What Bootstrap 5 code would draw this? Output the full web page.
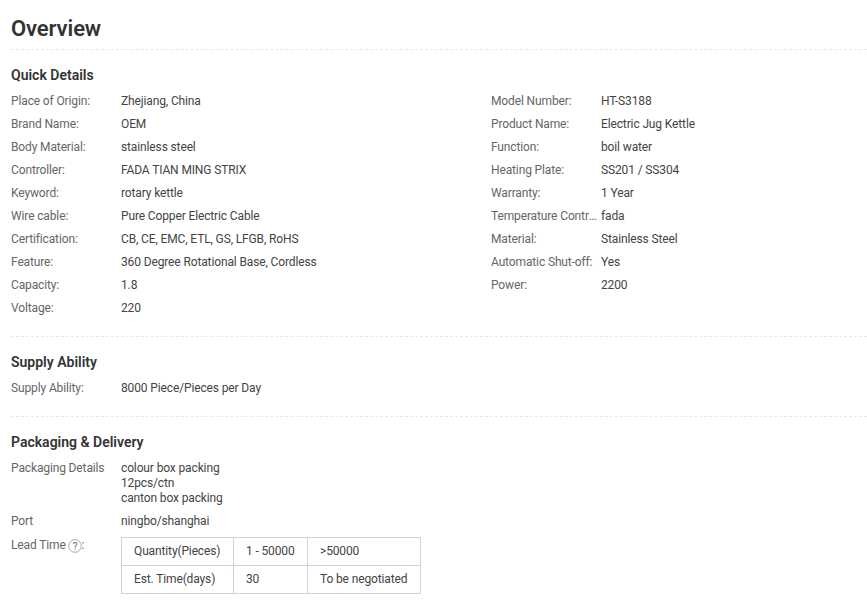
<!DOCTYPE html>
<html lang="en">
<head>
<meta charset="utf-8">
<title>Overview</title>
<link href="https://cdn.jsdelivr.net/npm/bootstrap@5.3.0/dist/css/bootstrap.min.css" rel="stylesheet">
<style>
body { font-family: Roboto, "Liberation Sans", sans-serif; font-size: 12px; line-height: 15px; letter-spacing: -0.13px; color: #444; background: #fff; }
.ov-page { padding-left: 11px; }
.ov-title { font-size: 22px; line-height: 26px; font-weight: 600; letter-spacing: -0.1px; color: #333; margin: 0; padding: 16px 0 7px; border-bottom: 1px dashed #e8e8e8; }
.ov-section { border-bottom: 1px dashed #e8e8e8; }
.ov-section-last { border-bottom: 0; }
.ov-quick { padding: 17px 0 16px; }
.ov-supply { padding: 17px 0 16px; }
.ov-pack { padding: 17px 0 0; }
.ov-head { font-size: 14px; line-height: 17px; font-weight: 600; letter-spacing: 0; color: #333; margin: 0 0 6px; }
.ov-cols { width: 960px; }
.ov-col { width: 480px; flex: none; }
.ov-item { padding: 4px 0; }
.ov-label { width: 110px; flex: none; color: #666; padding-right: 4px; white-space: nowrap; overflow: hidden; text-overflow: ellipsis; }
.ov-label-lead { padding-top: 1px; }
.ov-value { color: #444; }
.ov-help { width: 14px; height: 14px; vertical-align: -4px; margin-left: -1px; }
.ov-table { width: 300px; table-layout: fixed; border-collapse: collapse; }
.ov-table td { border: 1px solid #c9d3e3; height: 28px; padding: 0 12px; color: #444; white-space: nowrap; }
.ov-c1 { width: 112px; }
.ov-c2 { width: 74px; }
</style>
</head>
<body>
<div class="ov-page overflow-hidden">
  <h1 class="ov-title">Overview</h1>

  <section class="ov-section ov-quick">
    <h2 class="ov-head">Quick Details</h2>
    <div class="d-flex ov-cols">
      <div class="ov-col">
        <div class="d-flex ov-item"><div class="ov-label">Place of Origin:</div><div class="ov-value">Zhejiang, China</div></div>
        <div class="d-flex ov-item"><div class="ov-label">Brand Name:</div><div class="ov-value">OEM</div></div>
        <div class="d-flex ov-item"><div class="ov-label">Body Material:</div><div class="ov-value">stainless steel</div></div>
        <div class="d-flex ov-item"><div class="ov-label">Controller:</div><div class="ov-value">FADA TIAN MING STRIX</div></div>
        <div class="d-flex ov-item"><div class="ov-label">Keyword:</div><div class="ov-value">rotary kettle</div></div>
        <div class="d-flex ov-item"><div class="ov-label">Wire cable:</div><div class="ov-value">Pure Copper Electric Cable</div></div>
        <div class="d-flex ov-item"><div class="ov-label">Certification:</div><div class="ov-value">CB, CE, EMC, ETL, GS, LFGB, RoHS</div></div>
        <div class="d-flex ov-item"><div class="ov-label">Feature:</div><div class="ov-value">360 Degree Rotational Base, Cordless</div></div>
        <div class="d-flex ov-item"><div class="ov-label">Capacity:</div><div class="ov-value">1.8</div></div>
        <div class="d-flex ov-item"><div class="ov-label">Voltage:</div><div class="ov-value">220</div></div>
      </div>
      <div class="ov-col">
        <div class="d-flex ov-item"><div class="ov-label">Model Number:</div><div class="ov-value">HT-S3188</div></div>
        <div class="d-flex ov-item"><div class="ov-label">Product Name:</div><div class="ov-value">Electric Jug Kettle</div></div>
        <div class="d-flex ov-item"><div class="ov-label">Function:</div><div class="ov-value">boil water</div></div>
        <div class="d-flex ov-item"><div class="ov-label">Heating Plate:</div><div class="ov-value">SS201 / SS304</div></div>
        <div class="d-flex ov-item"><div class="ov-label">Warranty:</div><div class="ov-value">1 Year</div></div>
        <div class="d-flex ov-item"><div class="ov-label">Temperature Control:</div><div class="ov-value">fada</div></div>
        <div class="d-flex ov-item"><div class="ov-label">Material:</div><div class="ov-value">Stainless Steel</div></div>
        <div class="d-flex ov-item"><div class="ov-label">Automatic Shut-off:</div><div class="ov-value">Yes</div></div>
        <div class="d-flex ov-item"><div class="ov-label">Power:</div><div class="ov-value">2200</div></div>
      </div>
    </div>
  </section>

  <section class="ov-section ov-supply">
    <h2 class="ov-head">Supply Ability</h2>
    <div class="d-flex ov-item"><div class="ov-label">Supply Ability:</div><div class="ov-value">8000 Piece/Pieces per Day</div></div>
  </section>

  <section class="ov-section ov-section-last ov-pack">
    <h2 class="ov-head">Packaging &amp; Delivery</h2>
    <div class="d-flex ov-item"><div class="ov-label">Packaging Details</div><div class="ov-value">colour box packing<br>12pcs/ctn<br>canton box packing</div></div>
    <div class="d-flex ov-item"><div class="ov-label">Port</div><div class="ov-value">ningbo/shanghai</div></div>
    <div class="d-flex ov-item">
      <div class="ov-label ov-label-lead">Lead Time <svg class="ov-help" viewBox="0 0 14 14" aria-hidden="true"><circle cx="7" cy="7" r="6.3" fill="none" stroke="#9fabbd"/><text x="7" y="10.5" text-anchor="middle" font-size="10" font-family="Roboto, sans-serif" fill="#666">?</text></svg>:</div>
      <table class="ov-table">
        <tr><td class="ov-c1">Quantity(Pieces)</td><td class="ov-c2">1 - 50000</td><td>&gt;50000</td></tr>
        <tr><td class="ov-c1">Est. Time(days)</td><td class="ov-c2">30</td><td>To be negotiated</td></tr>
      </table>
    </div>
  </section>
</div>
</body>
</html>
